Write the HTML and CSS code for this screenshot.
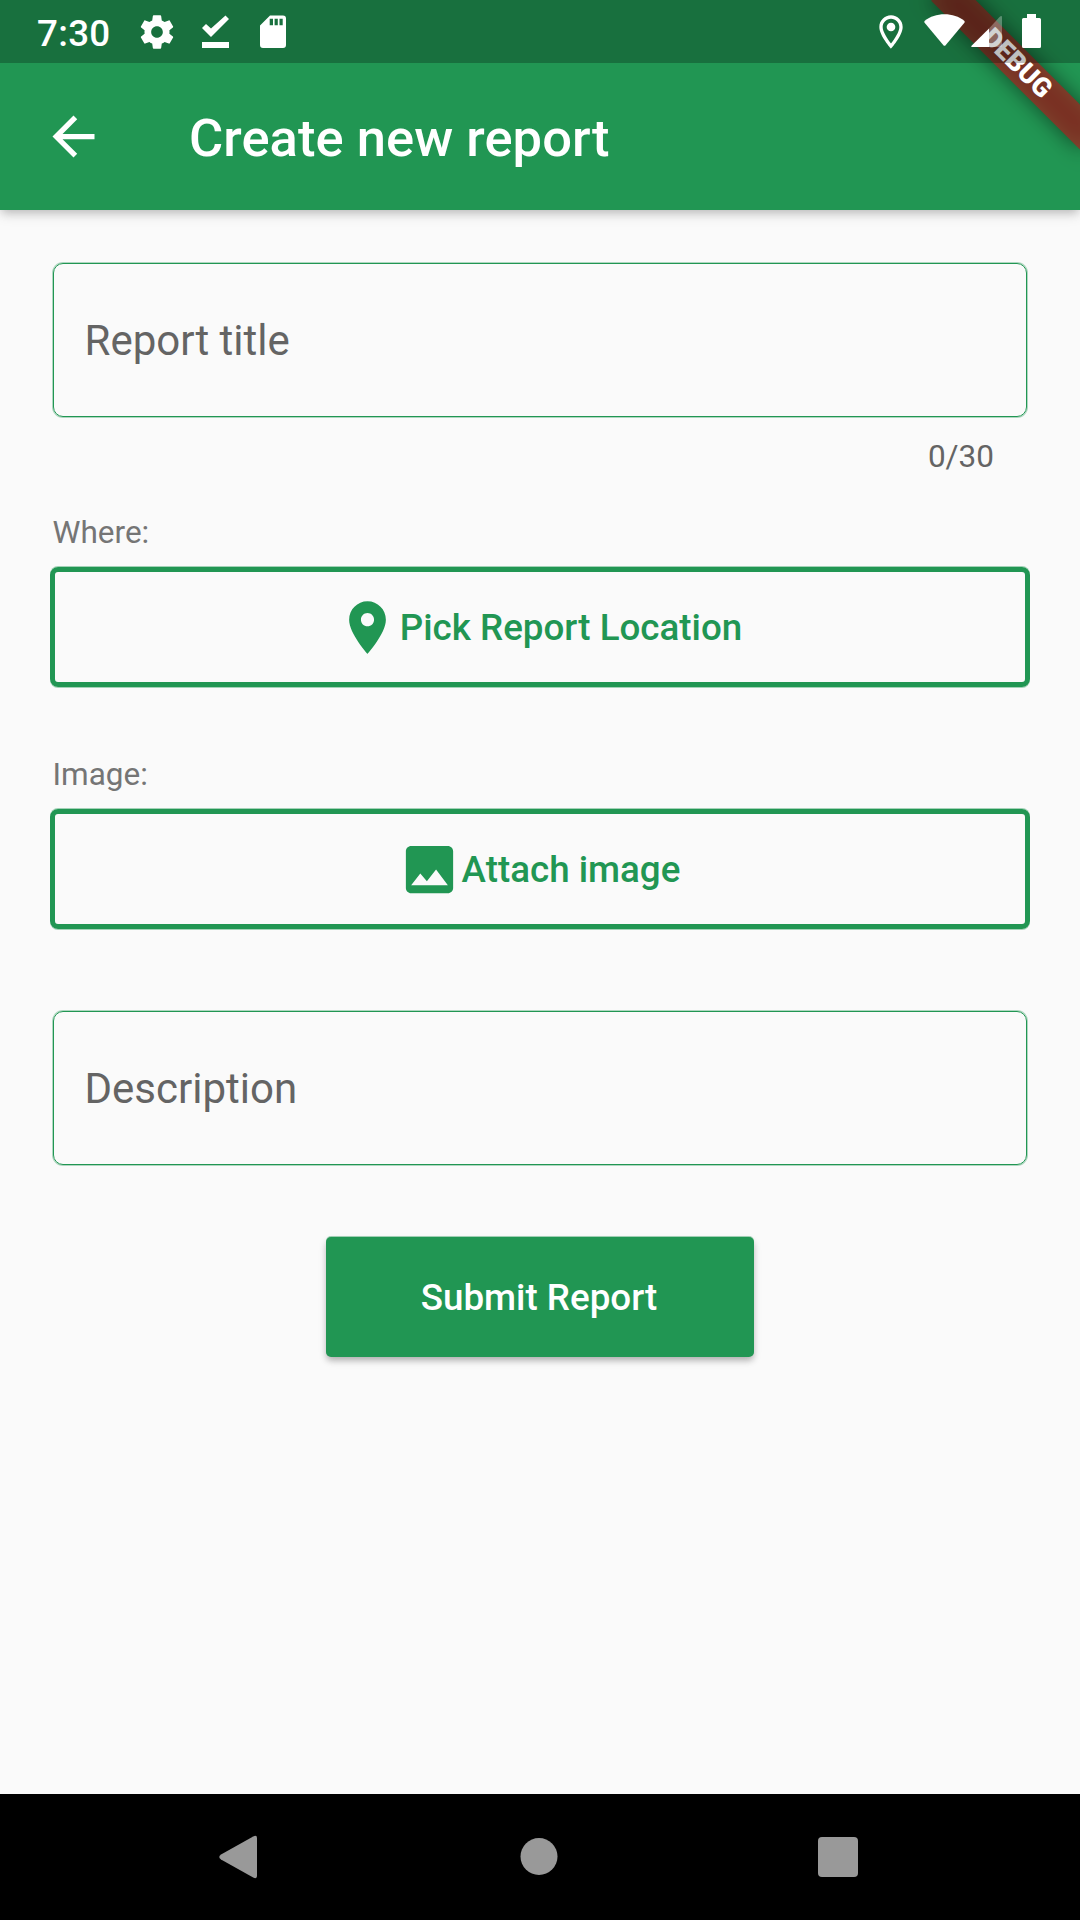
FILE: index.html
```html
<!DOCTYPE html>
<html lang="en">
<head>
<meta charset="utf-8">
<title>Create new report</title>
<link rel="stylesheet" href="styles.css">
</head>
<body>
<div class="screen">
  <header class="header">
    <div class="status-bar">
      <span class="clock">7:30</span>
      <svg class="status-gear" viewBox="0 0 24 24" width="40" height="40"><path d="M19.43 12.98c.04-.32.07-.64.07-.98s-.03-.66-.07-.98l2.11-1.65c.19-.15.24-.42.12-.64l-2-3.46c-.12-.22-.39-.3-.61-.22l-2.49 1c-.52-.4-1.08-.73-1.69-.98l-.38-2.65C14.46 2.18 14.25 2 14 2h-4c-.25 0-.46.18-.49.42l-.38 2.65c-.61.25-1.17.59-1.69.98l-2.49-1c-.23-.09-.49 0-.61.22l-2 3.46c-.13.22-.07.49.12.64l2.11 1.65c-.04.32-.07.65-.07.98s.03.66.07.98l-2.11 1.65c-.19.15-.24.42-.12.64l2 3.46c.12.22.39.3.61.22l2.49-1c.52.4 1.08.73 1.69.98l.38 2.65c.03.24.24.42.49.42h4c.25 0 .46-.18.49-.42l.38-2.65c.61-.25 1.17-.59 1.69-.98l2.49 1c.23.09.49 0 .61-.22l2-3.46c.12-.22.07-.49-.12-.64l-2.11-1.65zM12 15.5c-1.93 0-3.5-1.57-3.5-3.5s1.570-3.500 3.500-3.500 3.500 1.570 3.500 3.500-1.570 3.500-3.500 3.500z"/></svg>
      <svg class="status-done" viewBox="0 0 27 33" width="27" height="33"><path d="M0 13 4 9l5 4.500L23.500 0.500 27 4 9 22zM0 27h27v6H0z"/></svg>
      <svg class="status-card" viewBox="0 0 26 33" width="26" height="33"><path fill-rule="evenodd" d="M10 .5h13a3 3 0 0 1 3 3V30a3 3 0 0 1-3 3H3a3 3 0 0 1-3-3V10.500zM9.700 3.700v6.600H13V3.700zM14.600 3.700v6.600h3.200V3.700zM19.500 3.700v6.600h3.200V3.700z"/></svg>
      <span class="spacer"></span>
      <svg class="status-pin" viewBox="0 0 24 24" width="40" height="40"><path d="M12 2C8.130 2 5 5.130 5 9c0 5.250 7 13 7 13s7-7.750 7-13c0-3.870-3.130-7-7-7zM7 9c0-2.760 2.240-5 5-5s5 2.240 5 5c0 2.880-2.880 7.190-5 9.880C9.920 16.210 7 11.850 7 9z"/><circle cx="12" cy="9" r="2.600"/></svg>
      <svg class="status-wifi" viewBox="0 0 41 33" width="41" height="33"><path d="M.6 8.700a1.500 1.500 0 0 1 .2-1.900C6 2.500 13 .3 20.500.3S35 2.500 40.200 6.800a1.500 1.500 0 0 1 .2 1.900L21.600 31.200q-1.100 1.200-2.200 0z"/></svg>
      <svg class="status-signal" viewBox="0 0 31 31" width="31" height="31"><path d="M18 12.500V31H1.500Q-.6 31 .8 29.500z"/><path opacity=".3" d="M18 12.500 28.500 1Q31-1 31 1.500V29.500q0 1.500-1.500 1.500H18z"/></svg>
      <svg class="status-battery" viewBox="0 0 19 34" width="19" height="34"><path d="M5 0h9v4h3.500A1.500 1.500 0 0 1 19 5.500v27a1.500 1.500 0 0 1-1.500 1.500h-16A1.500 1.500 0 0 1 0 32.500v-27A1.500 1.500 0 0 1 1.500 4H5z"/></svg>
    </div>
    <div class="app-bar">
      <svg class="icon" viewBox="0 0 24 24"><path d="M20 11H7.830l5.590-5.590L12 4l-8 8 8 8 1.410-1.410L7.830 13H20v-2z"/></svg>
      <h1 class="title">Create new report</h1>
    </div>
    <div class="ribbon"><div class="ribbon-shadow"></div><div class="ribbon-band">DEBUG</div></div>
  </header>

  <main class="form">
    <div class="field">Report title</div>
    <div class="counter">0/30</div>
    <div class="label">Where:</div>
    <div class="outline-button">
      <svg class="icon" viewBox="0 0 24 24"><path d="M12 2C8.130 2 5 5.130 5 9c0 5.250 7 13 7 13s7-7.750 7-13c0-3.870-3.130-7-7-7zm0 9.500c-1.380 0-2.500-1.120-2.500-2.500s1.120-2.500 2.500-2.500 2.500 1.120 2.500 2.500-1.120 2.500-2.500 2.500z"/></svg>
      <span>Pick Report Location</span>
    </div>
    <div class="label label-image">Image:</div>
    <div class="outline-button">
      <svg class="icon" viewBox="0 0 24 24"><path d="M21 19V5c0-1.100-.9-2-2-2H5c-1.100 0-2 .9-2 2v14c0 1.100.9 2 2 2h14c1.100 0 2-.9 2-2zM8.500 13.500l2.500 3.010L14.500 12l4.500 6H5l3.500-4.500z"/></svg>
      <span>Attach image</span>
    </div>
    <div class="field field-description">Description</div>
    <div class="submit">Submit Report</div>
  </main>

  <nav class="nav-bar">
    <svg viewBox="0 0 38 44" width="38" height="44"><path d="M34.200 1.500Q38-.3 38 3v38q0 3.300-3.800 1.500L2 24.500q-3.500-2.500 0-5z"/></svg>
    <svg viewBox="0 0 40 38" width="40" height="38"><circle cx="21" cy="18.500" r="18.500"/></svg>
    <svg viewBox="0 0 40 40" width="40" height="40"><rect width="40" height="40" rx="4"/></svg>
  </nav>
</div>
</body>
</html>
```
FILE: styles.css
```css
* { box-sizing: border-box; }

body {
  margin: 0;
  font-family: Roboto, "Noto Sans", sans-serif;
  background: #fafafa;
}

svg { display: block; flex: none; }

.screen {
  display: flex;
  flex-direction: column;
  width: 1080px;
  height: 1920px;
  overflow: hidden;
  background: #fafafa;
}

.header {
  position: relative;
  flex: none;
  height: 210px;
  background: #219653;
  box-shadow: 0 4px 9px -2px rgba(0, 0, 0, .2), 0 6px 12px rgba(0, 0, 0, .09);
}

.status-bar {
  position: relative;
  z-index: 2;
  display: flex;
  align-items: flex-start;
  height: 63px;
  padding: 0 39px 0 37px;
  background: rgba(0, 0, 0, .25);
  fill: #fff;
}

.clock {
  width: 100px;
  font-size: 36.75px;
  font-weight: 500;
  line-height: 43px;
  letter-spacing: .3px;
  margin-top: 12px;
  color: #fff;
}

.spacer { flex: 1; }
.status-gear { margin-top: 12px; }
.status-done { margin: 15px 0 0 25px; }
.status-card { margin: 15px 0 0 31px; }
.status-pin { margin: 11.5px 13.5px 0 0; }
.status-wifi { margin: 14px 6px 0 0; }
.status-signal { margin: 16px 20px 0 0; }
.status-battery { margin-top: 14px; }

.app-bar {
  display: flex;
  align-items: center;
  height: 147px;
  padding-left: 42px;
  fill: #fff;
}

.icon { width: 63px; height: 63px; }

.title {
  margin: 2px 0 0 84px;
  font-size: 52.5px;
  font-weight: 500;
  line-height: 62px;
  letter-spacing: .05px;
  color: #fff;
}

.ribbon {
  position: absolute;
  inset: 0;
  overflow: hidden;
  z-index: 1;
}

.ribbon-shadow,
.ribbon-band {
  position: absolute;
  left: 975px;
  top: 73.5px;
  width: 210px;
  height: 31.5px;
  transform-origin: 105px -73.5px;
  transform: rotate(45deg);
}

.ribbon-shadow {
  background: rgba(0, 0, 0, .5);
  filter: blur(10.4px);
}

.ribbon-band {
  background: rgba(183, 28, 28, .627);
  color: #fff;
  font-size: 26.8px;
  font-weight: 900;
  line-height: 31.5px;
  text-align: center;
}

.form {
  flex: 1;
  display: flex;
  flex-direction: column;
  padding: 53px 50px 0;
}

.field {
  display: flex;
  align-items: center;
  height: 154px;
  margin: 0 3px;
  padding-left: 30.5px;
  border: 1px solid #219653;
  border-radius: 10px;
  box-shadow: 0 0 0 1px rgba(33, 150, 83, .35);
  font-size: 42px;
  color: #646464;
}

.counter {
  height: 37px;
  margin: 21px 36px 0 0;
  text-align: right;
  font-size: 31.5px;
  line-height: 37px;
  color: #646464;
}

.label {
  height: 37px;
  margin: 39px 0 0 2.5px;
  font-size: 31.5px;
  line-height: 37px;
  color: #757575;
}

.label-image { margin-top: 69px; }

.outline-button {
  display: flex;
  align-items: center;
  justify-content: center;
  height: 120px;
  margin-top: 16px;
  padding-right: 1px;
  border: 5px solid #219653;
  border-radius: 8px;
  box-shadow: 0 -1px rgba(33, 150, 83, .4), 0 1px rgba(33, 150, 83, .4);
  font-size: 36.75px;
  font-weight: 500;
  color: #219653;
  fill: #219653;
}

.outline-button .icon { margin: 0 .5px 0 -.5px; }

.field-description { margin-top: 82px; }

.submit {
  align-self: center;
  width: 428px;
  height: 120px;
  margin-top: 72px;
  padding-right: 2px;
  border-radius: 5px;
  background: #219653;
  box-shadow: 0 -1px rgba(33, 150, 83, .4), 0 4px 6px -1px rgba(0, 0, 0, .24), 0 4px 9px rgba(0, 0, 0, .1);
  font-size: 36.75px;
  font-weight: 500;
  line-height: 121px;
  text-align: center;
  color: #fff;
}

.nav-bar {
  flex: none;
  display: flex;
  align-items: center;
  justify-content: space-between;
  height: 126px;
  padding: 0 222px 0 219px;
  background: #000;
  fill: #999;
}
```
